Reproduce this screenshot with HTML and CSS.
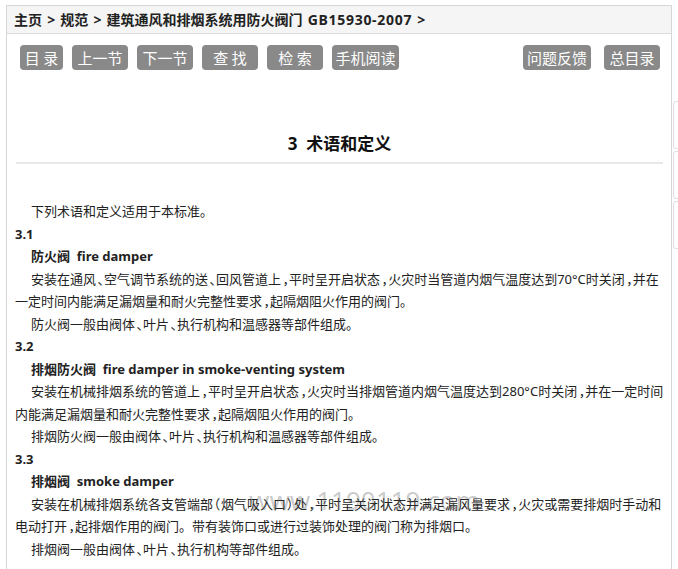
FILE: index.html
```html
<!DOCTYPE html>
<html lang="zh-CN">
<head>
<meta charset="utf-8">
<title>3 术语和定义</title>
<link rel="stylesheet" href="styles.css">
</head>
<body>
<div class="page">
  <div class="crumb">主页 &gt; 规范 &gt; 建筑通风和排烟系统用防火阀门 <span class="code">GB15930-2007</span> &gt;</div>
  <div class="toolbar">
    <div class="group">
      <span class="btn w2">目 录</span>
      <span class="btn w3">上一节</span>
      <span class="btn w3">下一节</span>
      <span class="btn w3">查 找</span>
      <span class="btn w3">检 索</span>
      <span class="btn w4">手机阅读</span>
    </div>
    <div class="group">
      <span class="btn w4b">问题反馈</span>
      <span class="btn w3">总目录</span>
    </div>
  </div>
  <h1 class="title">3&nbsp;&nbsp;术语和定义</h1>
  <div class="content">
    <p class="ind">下列术语和定义适用于本标准。</p>
    <p class="num">3.1</p>
    <p class="ind term">防火阀&nbsp;&nbsp;fire damper</p>
    <p class="ind">安装在通风<span class="pc">、</span>空气调节系统的送<span class="pc">、</span>回风管道上<span class="pc">，</span>平时呈开启状态<span class="pc">，</span>火灾时当管道内烟气温度达到70°C时关闭<span class="pc">，</span>并在一定时间内能满足漏烟量和耐火完整性要求<span class="pc">，</span>起隔烟阻火作用的阀门。</p>
    <p class="ind">防火阀一般由阀体<span class="pc">、</span>叶片<span class="pc">、</span>执行机构和温感器等部件组成。</p>
    <p class="num">3.2</p>
    <p class="ind term">排烟防火阀&nbsp;&nbsp;fire damper in smoke-venting system</p>
    <p class="ind">安装在机械排烟系统的管道上<span class="pc">，</span>平时呈开启状态<span class="pc">，</span>火灾时当排烟管道内烟气温度达到280°C时关闭<span class="pc">，</span>并在一定时间内能满足漏烟量和耐火完整性要求<span class="pc">，</span>起隔烟阻火作用的阀门。</p>
    <p class="ind">排烟防火阀一般由阀体<span class="pc">、</span>叶片<span class="pc">、</span>执行机构和温感器等部件组成。</p>
    <p class="num">3.3</p>
    <p class="ind term">排烟阀&nbsp;&nbsp;smoke damper</p>
    <p class="ind">安装在机械排烟系统各支管端部<span class="pb">（</span>烟气吸入口<span class="pb">）</span>处<span class="pc">，</span>平时呈关闭状态并满足漏风量要求<span class="pc">，</span>火灾或需要排烟时手动和电动打开<span class="pc">，</span>起排烟作用的阀门。带有装饰口或进行过装饰处理的阀门称为排烟口。</p>
    <p class="ind">排烟阀一般由阀体<span class="pc">、</span>叶片<span class="pc">、</span>执行机构等部件组成。</p>
  </div>
  <div class="watermark">www.1190119.com</div>
</div>
<div class="side">
  <div class="side-box"></div>
  <div class="side-box"></div>
  <div class="side-box"></div>
</div>
</body>
</html>
```

FILE: styles.css
```css
html, body {
  margin: 0;
  padding: 0;
  background: #fff;
}
body {
  font-family: "Noto Sans", "Noto Sans CJK SC", sans-serif;
  color: #222;
}
.page {
  position: relative;
  margin: 5px 0 0 6px;
  width: 664px;
  border: 1px solid #d6d6d6;
  border-bottom: none;
  min-height: 600px;
}
.crumb {
  height: 27px;
  line-height: 27px;
  background: #f5f5f5;
  border-bottom: 1px solid #dcdcdc;
  padding-left: 7px;
  font-size: 14px;
  font-weight: bold;
  color: #222;
  white-space: nowrap;
  word-spacing: 1.5px;
}
.code {
  letter-spacing: 0.7px;
}
.toolbar {
  display: flex;
  justify-content: space-between;
  padding: 11px 11px 0 13px;
}
.group {
  display: flex;
  gap: 9px;
}
.group + .group {
  gap: 13px;
}
.btn {
  display: inline-block;
  height: 25px;
  line-height: 25px;
  background: #898989;
  color: #fff;
  border-radius: 4px;
  font-size: 15px;
  text-align: center;
  white-space: pre;
  font-family: "Noto Sans CJK SC", sans-serif;
}
.w2 { width: 43px; }
.w3 { width: 56px; }
.w4 { width: 67px; }
.w4b { width: 68px; }
.title {
  margin: 62px 8px 0 9px;
  padding-bottom: 6px;
  border-bottom: 2px solid #e8e8e8;
  text-align: center;
  font-size: 17px;
  font-weight: bold;
  line-height: 24px;
  color: #111;
}
.content {
  padding: 36px 3px 0 8px;
  font-size: 13px;
  line-height: 22.5px;
  color: #222;
}
.content p {
  margin: 0;
}
.pc,
.pb {
  font-family: "Noto Sans CJK SC", sans-serif;
  font-feature-settings: "halt" 1;
}
.pc {
  margin-left: 1.5px;
}
.pb {
  margin: 0 0.75px;
}
.ind {
  text-indent: 16px;
}
.num, .term {
  font-weight: bold;
}
.watermark {
  position: absolute;
  left: 242px;
  top: 476px;
  font-size: 26px;
  color: rgba(90, 90, 90, 0.33);
  font-family: "Noto Sans", sans-serif;
  pointer-events: none;
  white-space: nowrap;
}
.side {
  position: absolute;
  left: 673px;
  top: 101px;
  width: 12px;
  display: flex;
  flex-direction: column;
  gap: 2px;
}
.side-box {
  height: 46px;
  border: 1px solid #e0e0e0;
  border-radius: 3px;
}
```
